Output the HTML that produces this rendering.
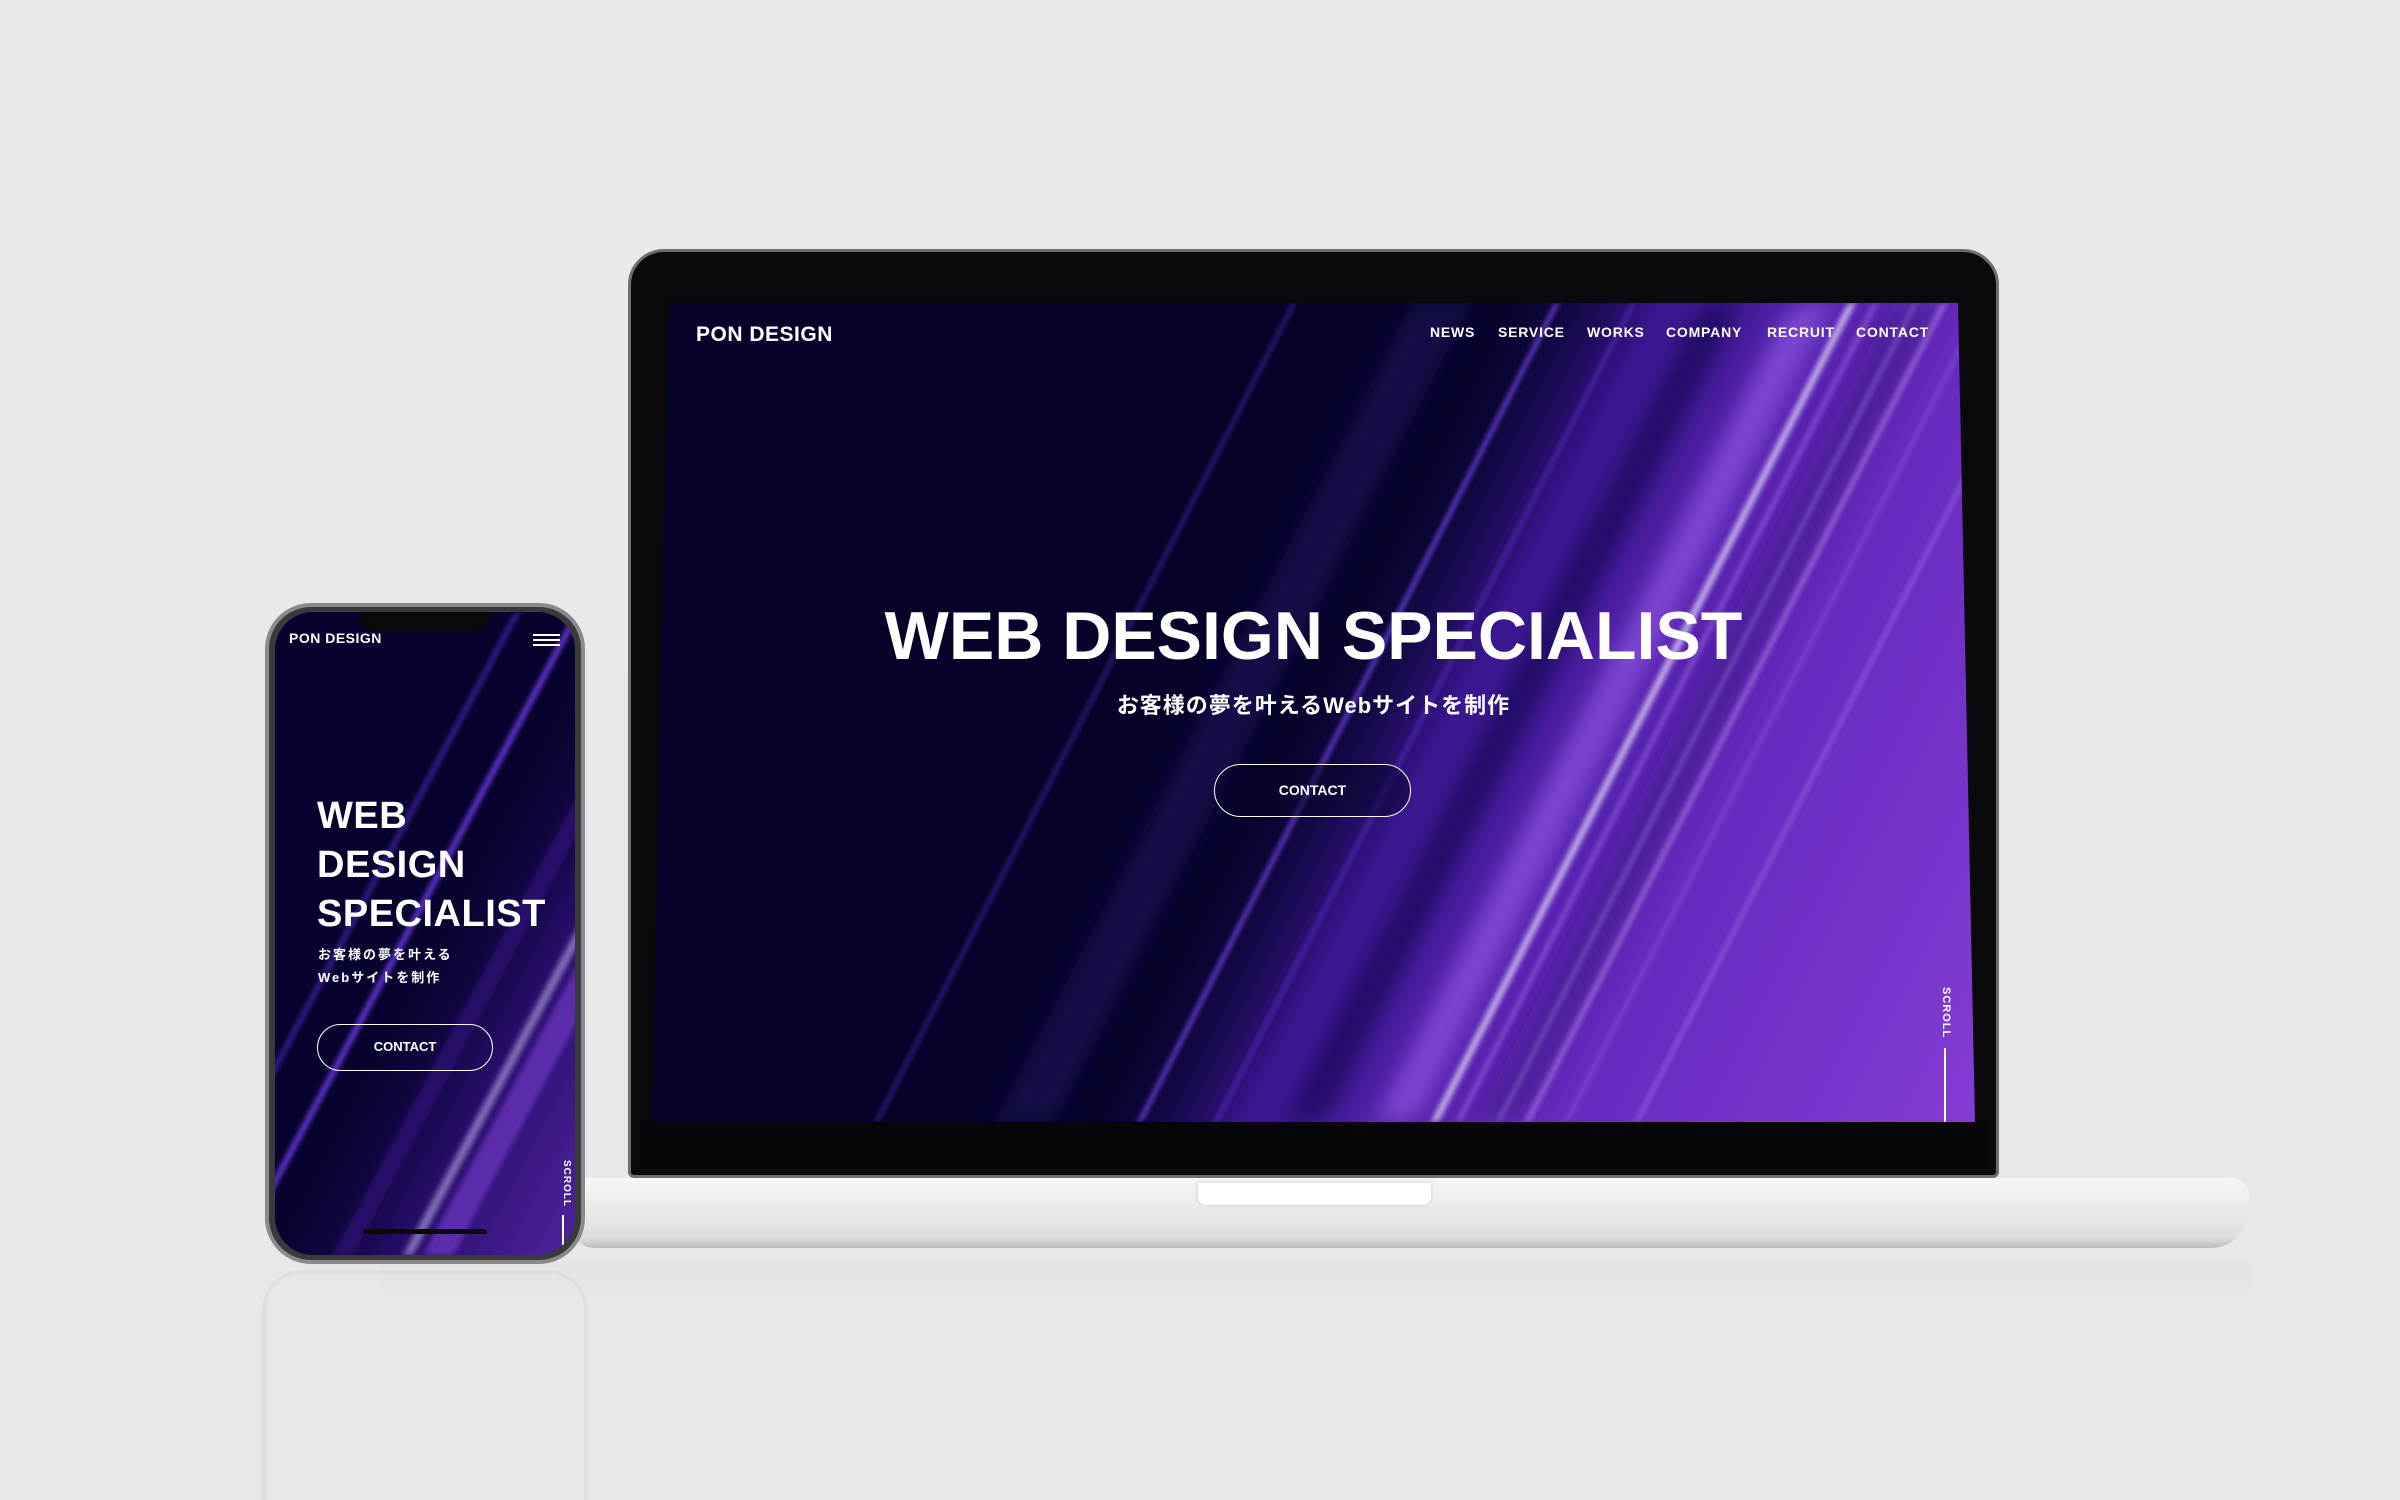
<!DOCTYPE html>
<html><head><meta charset="utf-8">
<style>
*{margin:0;padding:0;box-sizing:border-box}
body{width:2400px;height:1500px;overflow:hidden;background:linear-gradient(#e9e9e9,#e6e8e9);position:relative;font-family:"Liberation Sans","Noto Sans CJK JP",sans-serif;color:#fff}
.abs{position:absolute}
.lid{left:628px;top:249px;width:1371px;height:929px;background:#0a0a0c;border-radius:36px 36px 6px 6px;border:3px solid #6e6e72}
.screen{left:652px;top:303px;width:1323px;height:819px;clip-path:polygon(17px 0,1306px 0,1323px 819px,0 819px);overflow:hidden;background:#05032a}
.nav{top:21px;font-weight:bold;font-size:14px;letter-spacing:.8px}
svg{position:absolute;left:0;top:0}
</style></head><body>
<!-- reflection -->
<div class="abs" style="left:380px;top:1262px;width:1870px;height:50px;background:linear-gradient(#e0e0e0,#eaeaea);opacity:.6;border-radius:0 0 20px 20px"></div>
<div class="abs" style="left:262px;top:1270px;width:326px;height:230px;border:4px solid #d8d8d8;border-bottom:none;border-radius:40px 40px 0 0;opacity:.5"></div>

<!-- laptop -->
<div class="abs lid"></div>
<div class="abs screen">
 <svg width="1323" height="819" viewBox="0 0 1323 819">
  <defs>
   <linearGradient id="pg" x1="0" x2="1" y1="0" y2="0">
    <stop offset="0" stop-color="#05032a" stop-opacity="0"/>
    <stop offset=".18" stop-color="#3a1690"/>
    <stop offset=".45" stop-color="#6428bc"/>
    <stop offset="1" stop-color="#8a40d8"/>
   </linearGradient>
   <filter id="b"><feGaussianBlur stdDeviation="3"/></filter>
   <filter id="b2"><feGaussianBlur stdDeviation="12"/></filter>
  </defs>
  <g transform="skewX(-27)">
   <rect x="830" y="0" width="1000" height="819" fill="url(#pg)"/>
   <g filter="url(#b2)">
    <rect x="760" y="0" width="60" height="819" fill="#1a0a55" opacity=".7"/>
    <rect x="1050" y="0" width="40" height="819" fill="#0a0430" opacity=".5"/>
    <rect x="1140" y="0" width="40" height="819" fill="#9a60f0" opacity=".6"/>
    <rect x="1240" y="0" width="50" height="819" fill="#3a1480" opacity=".5"/>
   </g>
   <g filter="url(#b)">
    <rect x="640" y="0" width="4" height="819" fill="#5a30c8" opacity=".6"/>
    <rect x="903" y="0" width="4" height="819" fill="#7a48f0"/>
    <rect x="980" y="0" width="3" height="819" fill="#6a38e0" opacity=".8"/>
    <rect x="1196" y="0" width="8" height="819" fill="#cfc0f0" opacity=".85"/>
    <rect x="1222" y="0" width="3" height="819" fill="#b090f0" opacity=".7"/>
    <rect x="1262" y="0" width="3" height="819" fill="#b090f0" opacity=".6"/>
    <rect x="1290" y="0" width="5" height="819" fill="#c0a0f8" opacity=".6"/>
    <rect x="1330" y="0" width="3" height="819" fill="#a080f0" opacity=".5"/>
    <rect x="1400" y="0" width="4" height="819" fill="#b090f0" opacity=".5"/>
   </g>
  </g>
 </svg>
 <div class="abs" style="left:44px;top:20px;font-size:21px;font-weight:bold;letter-spacing:.5px">PON DESIGN</div>
 <div class="abs nav" style="left:778px">NEWS</div>
 <div class="abs nav" style="left:846px">SERVICE</div>
 <div class="abs nav" style="left:935px">WORKS</div>
 <div class="abs nav" style="left:1014px">COMPANY</div>
 <div class="abs nav" style="left:1115px">RECRUIT</div>
 <div class="abs nav" style="left:1204px">CONTACT</div>
 <div class="abs" style="left:0;width:1323px;top:294px;text-align:center;font-size:68px;font-weight:bold;letter-spacing:0">WEB DESIGN SPECIALIST</div>
 <div class="abs" style="left:0;width:1323px;top:385px;text-align:center;font-size:22px;font-weight:bold;letter-spacing:1px">お客様の夢を叶えるWebサイトを制作</div>
 <div class="abs" style="left:562px;top:461px;width:197px;height:53px;border:1.5px solid #fff;border-radius:27px;text-align:center;line-height:50px;font-size:14px;font-weight:bold;background:rgba(5,3,40,.5)">CONTACT</div>
 <div class="abs" style="left:1300px;top:684px;font-size:11px;font-weight:bold;letter-spacing:1px;transform:rotate(90deg);transform-origin:0 0">SCROLL</div>
 <div class="abs" style="left:1292px;top:745px;width:1.5px;height:74px;background:#fff"></div>
</div>
<div class="abs" style="left:640px;top:1122px;width:1347px;height:46px;background:#060608;border-radius:0 0 8px 8px"></div>
<div class="abs" style="left:574px;top:1178px;width:1676px;height:70px;background:linear-gradient(#f6f6f6,#ebebeb 40%,#dedede 85%,#bbb);border-radius:4px 20px 40px 20px"></div>
<div class="abs" style="left:1198px;top:1183px;width:233px;height:22px;background:#fff;border-radius:0 0 8px 8px;box-shadow:0 0 4px #ccc"></div>

<!-- phone -->
<div class="abs" style="left:265px;top:603px;width:320px;height:661px;background:#3a3a3c;border:4px solid #8a8a8c;border-radius:46px"></div>
<div class="abs" style="left:275px;top:612px;width:300px;height:643px;border-radius:38px;overflow:hidden;background:#06032e">
 <svg width="300" height="643" viewBox="0 0 300 643">
  <defs>
   <linearGradient id="pp" x1="0" x2="1"><stop offset="0" stop-color="#05032a" stop-opacity="0"/><stop offset=".4" stop-color="#2e1078"/><stop offset="1" stop-color="#7434cc"/></linearGradient>
  </defs>
  <g transform="skewX(-28)">
   <rect x="300" y="0" width="420" height="643" fill="url(#pp)" opacity=".85"/>
   <g filter="url(#b)">
    <rect x="240" y="0" width="5" height="643" fill="#5a30d0" opacity=".7"/>
    <rect x="300" y="0" width="6" height="643" fill="#6a38e0"/>
    <rect x="400" y="0" width="20" height="643" fill="#2a1070" opacity=".8"/>
    <rect x="470" y="0" width="10" height="643" fill="#a090d0" opacity=".7"/>
    <rect x="490" y="0" width="30" height="643" fill="#7a3ad0" opacity=".6"/>
   </g>
  </g>
 </svg>
 <div class="abs" style="left:85px;top:0;width:130px;height:20px;background:#0a0a0c;border-radius:0 0 14px 14px"></div>
 <div class="abs" style="left:14px;top:18px;font-size:14px;font-weight:bold;letter-spacing:.5px">PON DESIGN</div>
 <div class="abs" style="left:258px;top:22px;width:27px;height:2px;background:#fff;box-shadow:0 5px 0 #fff,0 10px 0 #fff"></div>
 <div class="abs" style="left:42px;top:180px;font-size:38px;font-weight:bold;line-height:49px;letter-spacing:.5px">WEB<br>DESIGN<br>SPECIALIST</div>
 <div class="abs" style="left:43px;top:331px;font-size:13px;font-weight:bold;line-height:23px;letter-spacing:2px">お客様の夢を叶える<br>Webサイトを制作</div>
 <div class="abs" style="left:42px;top:412px;width:176px;height:47px;border:1.5px solid #fff;border-radius:24px;text-align:center;line-height:44px;font-size:13px;font-weight:bold">CONTACT</div>
 <div class="abs" style="left:297px;top:548px;font-size:10px;font-weight:bold;letter-spacing:1px;transform:rotate(90deg);transform-origin:0 0">SCROLL</div>
 <div class="abs" style="left:287px;top:603px;width:1.5px;height:40px;background:#fff"></div>
 <div class="abs" style="left:88px;top:617px;width:124px;height:5px;background:#0a0a0c;border-radius:3px"></div>
</div>
</body></html>
